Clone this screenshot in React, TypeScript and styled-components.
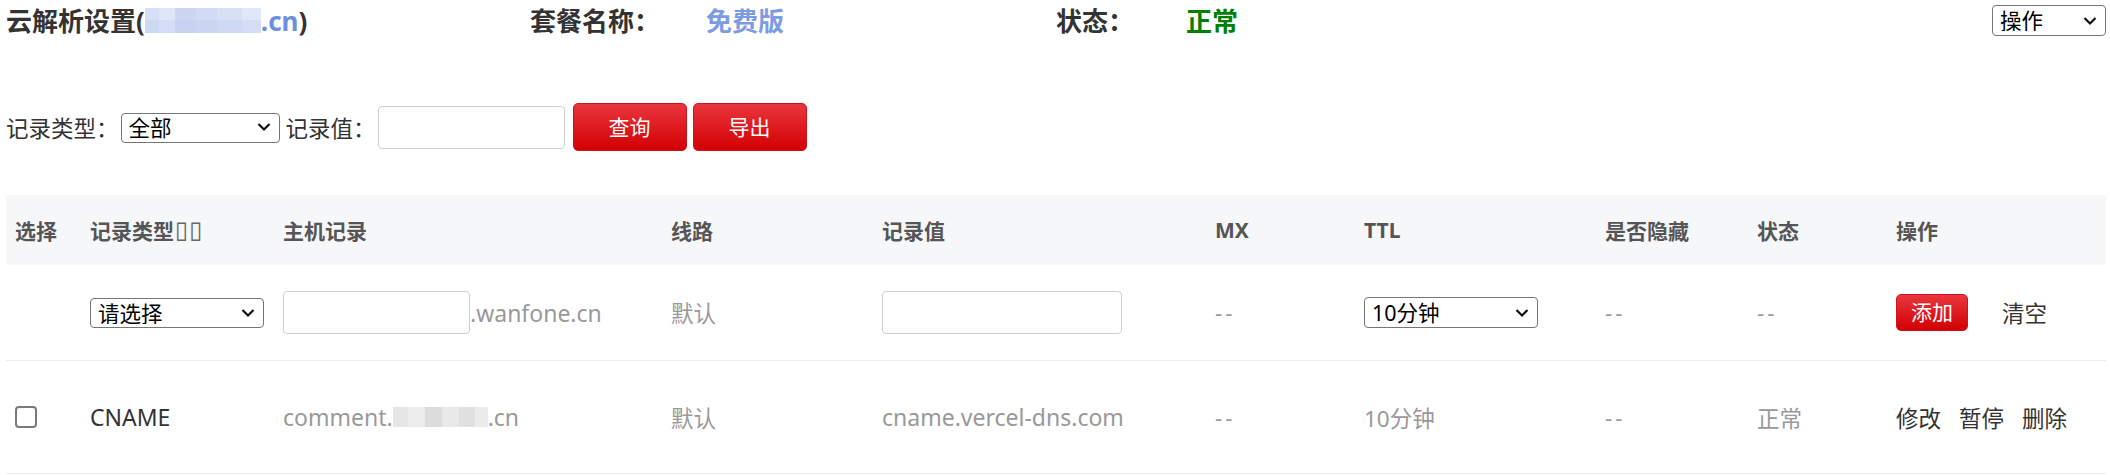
import React from "react";
import styled, { createGlobalStyle } from "styled-components";

const GlobalStyle = createGlobalStyle`
  html, body {
    margin: 0;
    padding: 0;
    background: #fff;
  }
  body {
    font-family: "Noto Sans", "Noto Sans CJK SC", sans-serif;
    color: #333;
  }
`;

const COLUMNS = "75px 193px 388px 211px 333px 149px 241px 152px 139px 219px";

const Page = styled.div`
  width: 2110px;
  box-sizing: border-box;
  padding: 0 4px 0 6px;
`;

const TitleBar = styled.div`
  display: flex;
  align-items: center;
  height: 41px;
  font-size: 26px;
  font-weight: 700;
  line-height: 1;
`;

const TitleItem = styled.span<{ $width?: number; $color?: string }>`
  flex: none;
  width: ${(p) => (p.$width ? `${p.$width}px` : "auto")};
  color: ${(p) => p.$color ?? "#333"};
  white-space: nowrap;
  display: flex;
  align-items: center;
`;

const Domain = styled.span`
  color: #6d8fdc;
`;

const TitleMask = styled.span`
  display: inline-block;
  width: 116px;
  height: 25px;
  background:
    linear-gradient(to bottom, rgba(255, 255, 255, 0) 50%, rgba(190, 204, 238, 0.35) 50%),
    linear-gradient(
      to right,
      #d6dff5 0 12%,
      #dfe6f7 12% 26%,
      #cbd6f1 26% 44%,
      #d1dbf3 44% 62%,
      #d7e0f5 62% 84%,
      #e0e7f8 84% 100%
    );
`;

const TopSelectWrap = styled.div`
  margin-left: auto;
`;

const FilterBar = styled.div`
  display: flex;
  align-items: center;
  height: 48px;
  margin-top: 62px;
  font-size: 22.5px;
  color: #333;
`;

const Label = styled.span<{ $gap?: number }>`
  flex: none;
  margin-left: ${(p) => p.$gap ?? 0}px;
  white-space: nowrap;
`;

const SelectBox = styled.span<{ $width: number; $height: number; $gap?: number }>`
  position: relative;
  display: inline-block;
  flex: none;
  width: ${(p) => p.$width}px;
  height: ${(p) => p.$height}px;
  margin-left: ${(p) => p.$gap ?? 0}px;

  select {
    appearance: none;
    width: 100%;
    height: 100%;
    box-sizing: border-box;
    border: 1px solid #767676;
    border-radius: 4px;
    background: #fff;
    color: #000;
    font-family: "Noto Sans", "Noto Sans CJK SC", sans-serif;
    font-size: 21.5px;
    padding: 0 0 0 7px;
    margin: 0;
    line-height: 1;
  }

  svg {
    position: absolute;
    right: 9px;
    top: 50%;
    transform: translateY(-50%);
    pointer-events: none;
  }
`;

const TextInput = styled.input<{ $width: number; $gap?: number }>`
  flex: none;
  width: ${(p) => p.$width}px;
  height: 43px;
  box-sizing: border-box;
  margin: 0 0 0 ${(p) => p.$gap ?? 0}px;
  border: 1px solid #cfcfcf;
  border-radius: 4px;
  background: #fff;
  outline: none;
`;

const RedButton = styled.button<{ $width: number; $height: number; $gap?: number }>`
  flex: none;
  width: ${(p) => p.$width}px;
  height: ${(p) => p.$height}px;
  margin-left: ${(p) => p.$gap ?? 0}px;
  padding: 0;
  border: 1px solid #c9141b;
  border-radius: 5px;
  background: linear-gradient(to bottom, #e9363e, #d30002);
  color: #fff;
  font-family: "Noto Sans", "Noto Sans CJK SC", sans-serif;
  font-size: 21px;
  line-height: 1;
`;

const Table = styled.div`
  margin-top: 44px;
  width: 2100px;
`;

const Row = styled.div<{ $height: number; $head?: boolean }>`
  display: grid;
  grid-template-columns: ${COLUMNS};
  align-items: center;
  height: ${(p) => p.$height}px;
  background: ${(p) => (p.$head ? "#f6f7f9" : "#fff")};
  border-bottom: ${(p) => (p.$head ? "none" : "1px solid #ececec")};
  font-size: ${(p) => (p.$head ? "21px" : "22.5px")};
  font-weight: ${(p) => (p.$head ? 700 : 400)};
  color: ${(p) => (p.$head ? "#555" : "#999")};
`;

const Cell = styled.div<{ $dark?: boolean }>`
  display: flex;
  align-items: center;
  padding-left: 9px;
  white-space: nowrap;
  color: ${(p) => (p.$dark ? "#333" : "inherit")};
`;

const Latin = styled.span`
  font-size: 23px;
`;

const Tofu = styled.span`
  font-family: "DejaVu Sans", sans-serif;
  font-weight: 400;
  font-size: 24px;
  color: #666;
  letter-spacing: 1px;
  margin-left: 1px;
`;

const Dash = styled.span`
  letter-spacing: 3px;
`;

const HostMask = styled.span`
  display: inline-block;
  width: 95px;
  height: 20px;
  background: linear-gradient(
    to right,
    #e6e6e6 0 16%,
    #ededed 16% 34%,
    #dcdcdc 34% 52%,
    #e9e9e9 52% 70%,
    #e1e1e1 70% 86%,
    #ececec 86% 100%
  );
`;

const CheckBox = styled.input`
  appearance: none;
  width: 22px;
  height: 22px;
  margin: 0;
  box-sizing: border-box;
  border: 2px solid #7a7a7a;
  border-radius: 4px;
  background: #fff;
`;

const Actions = styled.div<{ $gap: number }>`
  display: flex;
  align-items: center;
  gap: ${(p) => p.$gap}px;
  color: #333;
`;

const Chevron = () => (
  <svg width="14" height="9" viewBox="0 0 14 9">
    <path d="M1.5 1.5 L7 7 L12.5 1.5" fill="none" stroke="#111" strokeWidth="2.2" />
  </svg>
);

const Select = ({
  value,
  width,
  height,
  gap,
}: {
  value: string;
  width: number;
  height: number;
  gap?: number;
}) => (
  <SelectBox $width={width} $height={height} $gap={gap}>
    <select defaultValue={value}>
      <option>{value}</option>
    </select>
    <Chevron />
  </SelectBox>
);

const headers = [
  "选择",
  "记录类型",
  "主机记录",
  "线路",
  "记录值",
  "MX",
  "TTL",
  "是否隐藏",
  "状态",
  "操作",
];

export default function App() {
  return (
    <Page>
      <GlobalStyle />
      <TitleBar>
        <TitleItem $width={524}>
          云解析设置(<TitleMask />
          <Domain>.cn</Domain>)
        </TitleItem>
        <TitleItem $width={176}>套餐名称：</TitleItem>
        <TitleItem $width={350} $color="#7b9be2">
          免费版
        </TitleItem>
        <TitleItem $width={130}>状态：</TitleItem>
        <TitleItem $color="#008000">正常</TitleItem>
        <TopSelectWrap>
          <Select value="操作" width={114} height={31} />
        </TopSelectWrap>
      </TitleBar>

      <FilterBar>
        <Label>记录类型：</Label>
        <Select value="全部" width={159} height={30} gap={2} />
        <Label $gap={6}>记录值：</Label>
        <TextInput $width={187} $gap={2} />
        <RedButton $width={114} $height={48} $gap={8}>
          查询
        </RedButton>
        <RedButton $width={114} $height={48} $gap={6}>
          导出
        </RedButton>
      </FilterBar>

      <Table>
        <Row $head $height={70}>
          {headers.map((h) => (
            <Cell key={h}>
              {h}
              {h === "记录类型" && <Tofu>▯▯</Tofu>}
            </Cell>
          ))}
        </Row>

        <Row $height={95}>
          <Cell />
          <Cell>
            <Select value="请选择" width={174} height={30} />
          </Cell>
          <Cell>
            <TextInput $width={187} />
            <Latin>.wanfone.cn</Latin>
          </Cell>
          <Cell>默认</Cell>
          <Cell>
            <TextInput $width={240} />
          </Cell>
          <Cell>
            <Dash>--</Dash>
          </Cell>
          <Cell>
            <Select value="10分钟" width={174} height={31} />
          </Cell>
          <Cell>
            <Dash>--</Dash>
          </Cell>
          <Cell>
            <Dash>--</Dash>
          </Cell>
          <Cell>
            <Actions $gap={34}>
              <RedButton $width={72} $height={37}>
                添加
              </RedButton>
              <span>清空</span>
            </Actions>
          </Cell>
        </Row>

        <Row $height={112}>
          <Cell>
            <CheckBox type="checkbox" />
          </Cell>
          <Cell $dark>
            <Latin>CNAME</Latin>
          </Cell>
          <Cell>
            <Latin>comment.</Latin>
            <HostMask />
            <Latin>.cn</Latin>
          </Cell>
          <Cell>默认</Cell>
          <Cell>
            <Latin>cname.vercel-dns.com</Latin>
          </Cell>
          <Cell>
            <Dash>--</Dash>
          </Cell>
          <Cell>10分钟</Cell>
          <Cell>
            <Dash>--</Dash>
          </Cell>
          <Cell>正常</Cell>
          <Cell>
            <Actions $gap={18}>
              <span>修改</span>
              <span>暂停</span>
              <span>删除</span>
            </Actions>
          </Cell>
        </Row>
      </Table>
    </Page>
  );
}
